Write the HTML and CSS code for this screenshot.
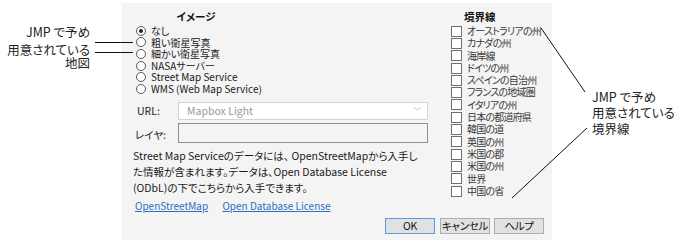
FILE: index.html
```html
<!DOCTYPE html>
<html>
	<head>
		<title>地図の設定</title>
		<meta charset="utf-8">
		<link rel="stylesheet" href="styles.css">
	</head>
	<body>
		<div class="note note-left">
			<p>JMP で予め</p>
			<p>用意されている</p>
			<p>地図</p>
		</div>

		<div class="panel">
			<div class="top">
				<div class="main">
					<div class="imagery">
						<h3>イメージ</h3>
						<div class="radio checked"><span class="dot"></span>なし</div>
						<div class="radio"><span class="dot"></span>粗い衛星写真</div>
						<div class="radio"><span class="dot"></span>細かい衛星写真</div>
						<div class="radio"><span class="dot"></span>NASAサーバー</div>
						<div class="radio"><span class="dot"></span>Street Map Service</div>
						<div class="radio"><span class="dot"></span>WMS (Web Map Service)</div>
					</div>

					<div class="field field-url">
						<span class="label">URL:</span>
						<div class="select"><span>Mapbox Light</span><span class="arrow">&#xFE40;</span></div>
					</div>
					<div class="field field-layer">
						<span class="label">レイヤ:</span>
						<div class="input"></div>
					</div>

					<p class="info">
						Street Map Serviceのデータには、 OpenStreetMapから入手し<br>
						た情報が含まれます。データは、Open Database License<br>
						(ODbL)の下でこちらから入手できます。
					</p>
					<p class="links">
						<a href="#">OpenStreetMap</a>
						<a href="#">Open Database License</a>
					</p>
				</div>

				<div class="borders">
					<h3>境界線</h3>
					<div class="check"><span class="box"></span>オーストラリアの州</div>
					<div class="check"><span class="box"></span>カナダの州</div>
					<div class="check"><span class="box"></span>海岸線</div>
					<div class="check"><span class="box"></span>ドイツの州</div>
					<div class="check"><span class="box"></span>スペインの自治州</div>
					<div class="check"><span class="box"></span>フランスの地域圏</div>
					<div class="check"><span class="box"></span>イタリアの州</div>
					<div class="check"><span class="box"></span>日本の都道府県</div>
					<div class="check"><span class="box"></span>韓国の道</div>
					<div class="check"><span class="box"></span>英国の州</div>
					<div class="check"><span class="box"></span>米国の郡</div>
					<div class="check"><span class="box"></span>米国の州</div>
					<div class="check"><span class="box"></span>世界</div>
					<div class="check"><span class="box"></span>中国の省</div>
				</div>
			</div>

			<div class="buttons">
				<span class="button default">OK</span>
				<span class="button">キャンセル</span>
				<span class="button">ヘルプ</span>
			</div>
		</div>

		<div class="note note-right">
			<p>JMP で予め</p>
			<p>用意されている</p>
			<p>境界線</p>
		</div>

		<svg class="leaders" width="685" height="240">
			<line x1="95" y1="42.5" x2="133" y2="42.5"></line>
			<line x1="95" y1="52.5" x2="133" y2="52.5"></line>
			<line x1="541" y1="28" x2="585" y2="92"></line>
			<line x1="512" y1="198" x2="587" y2="128"></line>
		</svg>
	</body>
</html>
```

FILE: styles.css
```css
*{
	margin:0;
	padding:0;
	box-sizing:border-box;
}
body{
	width:685px;
	height:240px;
	overflow:hidden;
	background-color:white;
	font-family:"Noto Sans CJK JP", "Noto Sans", sans-serif;
	font-feature-settings:"palt";
	color:#1a1a1a;
	display:flex;
	position:relative;
}

/* callouts on both sides */
.note{
	flex:none;
	font-size:12.5px;
	line-height:16px;
	color:#222;
}
.note-left{
	width:122px;
	padding:24px 32px 0 0;
	text-align:right;
}
.note-left p:nth-child(2){
	margin-top:2px;
}
.note-left p:nth-child(3){
	margin-top:-3px;
}
.note-right{
	padding:89px 0 0 40px;
}
.leaders{
	position:absolute;
	left:0;
	top:0;
	pointer-events:none;
}
.leaders line{
	stroke:#111;
	stroke-width:1;
}

/* dialog */
.panel{
	flex:none;
	width:430px;
	height:237px;
	margin-top:3px;
	background-color:#f4f4f4;
	padding:7px 8px 0 11px;
	font-size:10.5px;
	display:flex;
	flex-direction:column;
}
.top{
	display:flex;
}
.main{
	flex:none;
	width:318px;
}
h3{
	font-size:10.5px;
	line-height:14px;
	font-weight:bold;
	color:#111;
}
.imagery{
	width:126px;
}
.imagery h3{
	text-align:center;
	margin-bottom:1px;
}
.radio{
	display:flex;
	align-items:center;
	height:11.6px;
	line-height:11.6px;
	padding-left:3px;
	font-size:10px;
	color:#1a1a1a;
	white-space:nowrap;
}
.radio .dot{
	width:10px;
	height:10px;
	border:1px solid #5a5a5a;
	border-radius:50%;
	background-color:white;
	margin-right:5px;
	flex:none;
	display:flex;
	align-items:center;
	justify-content:center;
}
.radio.checked .dot::after{
	content:"";
	width:4px;
	height:4px;
	border-radius:50%;
	background-color:#222;
}

.field{
	display:flex;
	align-items:center;
}
.field .label{
	width:45px;
	padding-left:4px;
	color:#222;
}
.field-url{
	margin-top:7px;
}
.field-layer{
	margin-top:3px;
}
.field-layer .label{
	padding-left:2px;
	position:relative;
	top:2px;
}
.select{
	width:250px;
	height:18px;
	border:1px solid #d4d4d4;
	background-color:white;
	color:#9a9a9a;
	display:flex;
	align-items:center;
	justify-content:space-between;
	padding:0 6px 0 8px;
}
.select .arrow{
	font-size:8px;
	color:#aaa;
}
.input{
	width:250px;
	height:20px;
	border:1px solid #8f8f8f;
	background-color:#f4f4f4;
}

.info{
	margin-top:5px;
	line-height:16px;
	color:#1a1a1a;
	white-space:nowrap;
}
.links{
	margin-top:2px;
	line-height:16px;
	padding-left:2px;
	font-size:10px;
}
.links a{
	color:#2b6fc2;
	margin-right:12px;
}

.borders h3{
	padding-left:13px;
	margin-bottom:1px;
}
.check{
	display:flex;
	align-items:center;
	height:12.3px;
	line-height:12.3px;
	font-size:10px;
	letter-spacing:-0.8px;
	color:#3a3a3a;
	white-space:nowrap;
}
.check .box{
	width:11px;
	height:11px;
	border:1px solid #707070;
	background-color:white;
	margin-right:5px;
	flex:none;
}

.buttons{
	display:flex;
	justify-content:flex-end;
	gap:4px;
	margin-top:4px;
}
.button{
	width:50px;
	height:16px;
	border:1px solid #adadad;
	background-color:#e1e1e1;
	text-align:center;
	line-height:14px;
	color:#111;
	white-space:nowrap;
	letter-spacing:-0.3px;
}
.button.default{
	border-color:#5a9be0;
	margin-right:1px;
}
```
